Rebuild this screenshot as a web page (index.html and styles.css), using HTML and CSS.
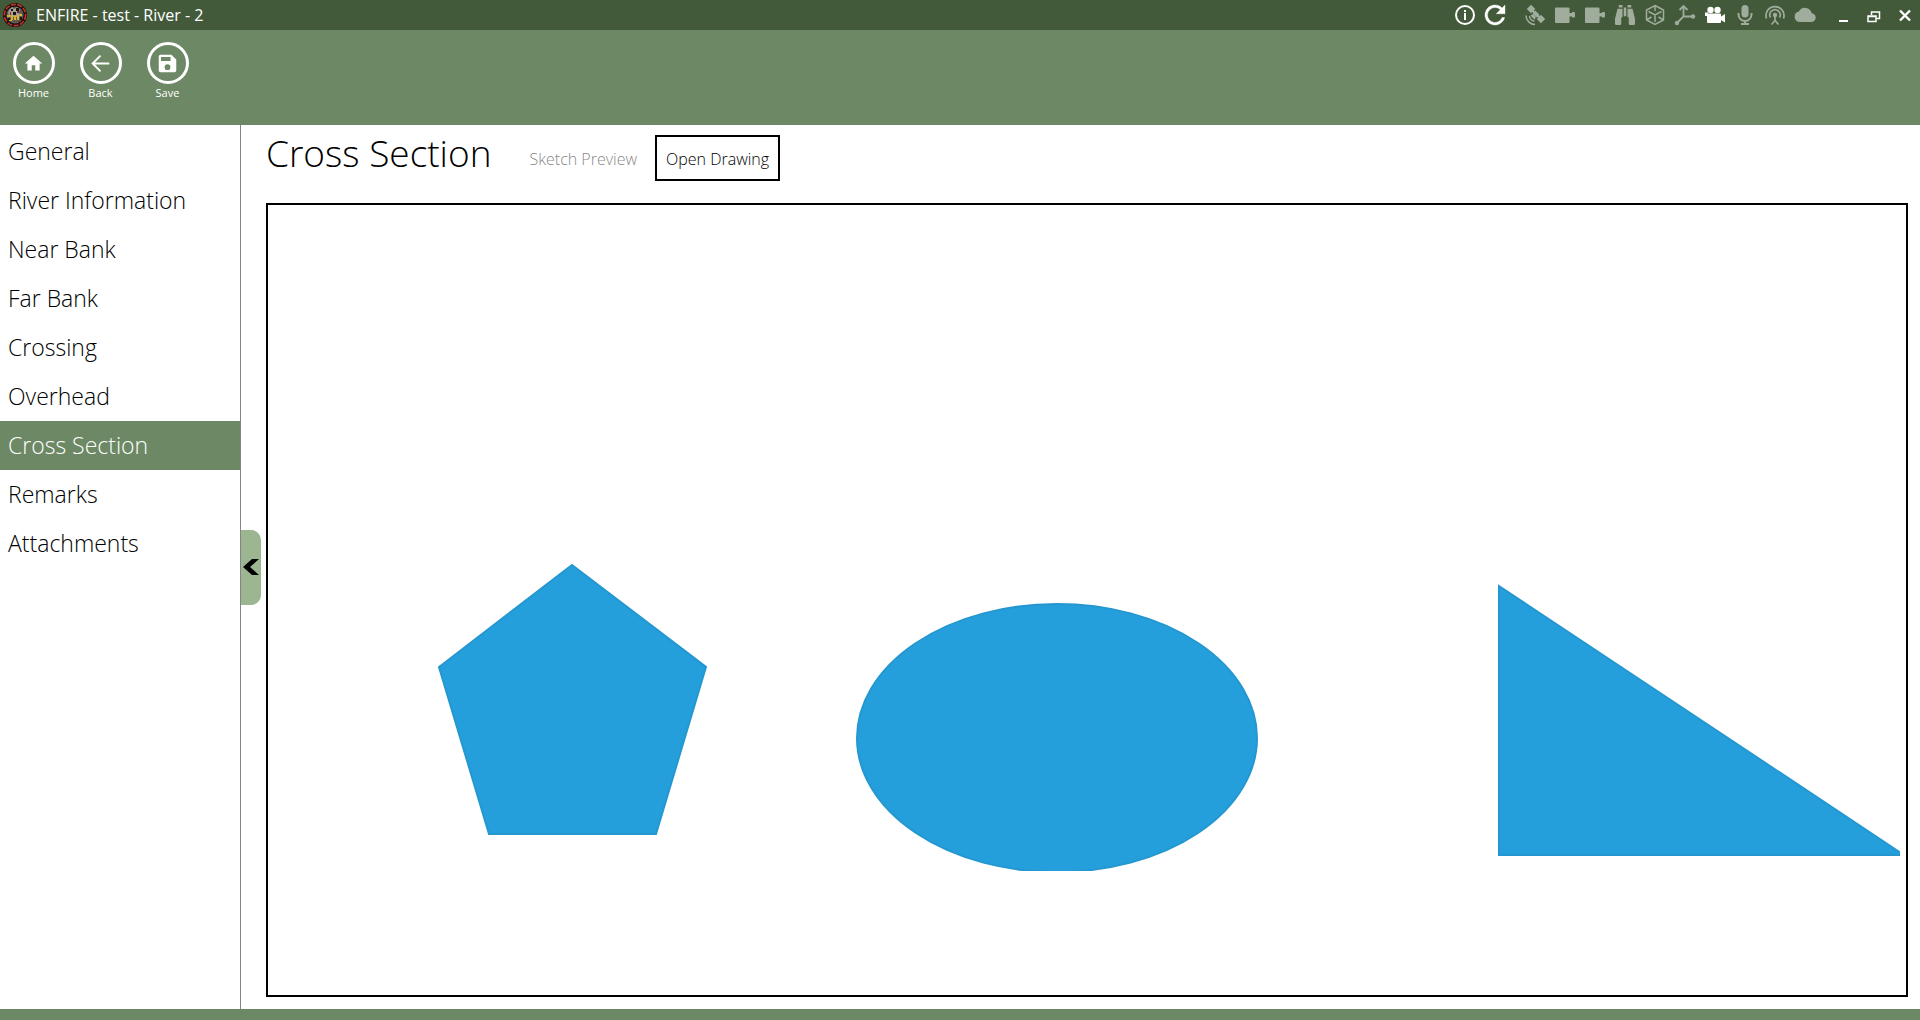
FILE: index.html
```html
<!DOCTYPE html>
<html lang="en">
<head>
<meta charset="utf-8">
<title>ENFIRE - test - River - 2</title>
<link rel="stylesheet" href="styles.css">
</head>
<body>
<div class="app">
  <header class="titlebar">
    <svg class="logo" viewBox="0 0 24 24" aria-hidden="true">
      <circle cx="12" cy="12" r="12" fill="#1c0f0d"/>
      <circle cx="12" cy="12" r="10.6" fill="none" stroke="#c8322a" stroke-width="1.6" stroke-dasharray="5 1.5"/>
      <circle cx="12" cy="12" r="8.6" fill="#5d5a54"/>
      <path d="M6 7l3-3 2 2 3-2 3 3-2 3 3 1-2 3H7l-2-4z" fill="#a39e96"/>
      <path d="M8 6h2v2H8zM13 5h3v3h-3zM10 9h3v3h-3zM5 15h2v3H5zM17 14h2v3h-2z" fill="#1b1716"/>
      <path d="M14 8h2v2h-2zM7 9h1v3H7zM15 18h3v1h-3z" fill="#7e2420"/>
      <path d="M4 12h3v2H4zM8 12h2v5H8zM11 13h2v4h-2zM14 12h2v5h-2zM17 11h2v2h-2zM6 17h3v1H6z" fill="#d9b52c"/>
    </svg>
    <span class="app-title">ENFIRE - test - River - 2</span>
    <div class="tray">
      <button class="tray-btn" aria-label="Information"><svg viewBox="0 0 30 30"><circle cx="15" cy="15" r="9" fill="none" stroke="currentColor" stroke-width="2"/><path d="M14 10h2v2h-2zM14 13h2v7h-2z"/></svg></button>
      <button class="tray-btn" aria-label="Refresh"><svg viewBox="0 0 24 24"><path d="M17.650 6.350A8 8 0 1 0 19.730 14h-2.080A6 6 0 1 1 12 6c1.660 0 3.140.690 4.220 1.780L13 11h7V4z" stroke="currentColor" stroke-width=".3"/></svg></button>
    </div>
    <div class="tray tray-status">
      <button class="tray-btn off" aria-label="Satellite"><svg viewBox="0 0 30 30"><g transform="translate(16 14) rotate(45)"><path d="M-10-3h6v6h-6zM4-3h6v6H4zM-3-2h6v4h-6zM-5-1H5v2H-5z"/><path d="M-2 2h4l1 3h-6z"/></g><path d="M9.500 16a5.500 5.500 0 0 0 5 5M6 15.500a9 9 0 0 0 9 9" fill="none" stroke="currentColor" stroke-width="1.500"/></svg></button>
      <button class="tray-btn off" aria-label="Plug one"><svg viewBox="0 0 30 30"><path d="M6 7.500h12.500q1 0 1 1V13h2.500v-1h2q1 0 1 1v3.500q0 1-1 1h-2v-1h-2.500V22q0 1-1 1H6q-1 0-1-1V8.500q0-1 1-1z"/></svg></button>
      <button class="tray-btn off" aria-label="Plug two"><svg viewBox="0 0 30 30"><path d="M6 7.500h12.500q1 0 1 1V13h2.500v-1h2q1 0 1 1v3.500q0 1-1 1h-2v-1h-2.500V22q0 1-1 1H6q-1 0-1-1V8.500q0-1 1-1z"/></svg></button>
      <button class="tray-btn off" aria-label="Binoculars"><svg viewBox="0 0 24 24"><path d="M11 6h2v7h-2zM9 19a1 1 0 0 1-1 1H5a1 1 0 0 1-1-1v-4L6 7h4v6a1 1 0 0 1-1 1zM10 6H7V4h3zM15 19v-5a1 1 0 0 1-1-1V7h4l2 8v4a1 1 0 0 1-1 1h-3a1 1 0 0 1-1-1zM14 6V4h3v2z"/></svg></button>
      <button class="tray-btn off" aria-label="Model"><svg viewBox="0 0 30 30"><path d="M15 5.500l8.500 4.500v10L15 24.500 6.500 20V10zM15 5.500V11M8.500 11.500L15 15l6.500-3.500M15 15v7M6.500 20l5-3M23.500 20l-5-3" fill="none" stroke="currentColor" stroke-width="1.500"/></svg></button>
      <button class="tray-btn off" aria-label="Axes"><svg viewBox="0 0 30 30"><path d="M13.500 6v10.500l-6 6M13.500 16.500H23M9.500 10l4-4 4 4" fill="none" stroke="currentColor" stroke-width="1.800"/><circle cx="23" cy="16.500" r="2.200"/><circle cx="7" cy="23" r="2.200"/></svg></button>
      <button class="tray-btn" aria-label="Camera"><svg viewBox="0 0 30 30"><circle cx="10.500" cy="10" r="3.200"/><circle cx="17.500" cy="10" r="3.200"/><path d="M5 12.500h3v1h12q1 0 1 1v2l4-2.500v8.500L21 20v2q0 1-1 1H8q-1 0-1-1v-6H5z"/></svg></button>
      <button class="tray-btn off" aria-label="Microphone"><svg viewBox="0 0 30 30"><rect x="11.500" y="5" width="7" height="12.500" rx="3.500"/><path d="M8.500 13v1.500a6.500 6.500 0 0 0 13 0V13M15 21v3M11 24h8" fill="none" stroke="currentColor" stroke-width="2"/></svg></button>
      <button class="tray-btn off" aria-label="Antenna"><svg viewBox="0 0 30 30"><circle cx="15" cy="15" r="2.200"/><path d="M6.500 18.500a9 9 0 1 1 17 0M10.500 17.500a5.200 5.200 0 1 1 9 0M15 16v5M11.500 24.500l3.500-4 3.500 4" fill="none" stroke="currentColor" stroke-width="1.700"/></svg></button>
      <button class="tray-btn off" aria-label="Cloud"><svg viewBox="0 0 24 24"><path d="M17.400 10.600A5.600 5.600 0 0 0 7.100 9.100 4.300 4.300 0 0 0 8 17.600h8.700a3.500 3.500 0 0 0 .7-7z"/></svg></button>
    </div>
    <div class="window-controls">
      <button class="win-btn" aria-label="Minimize"><svg viewBox="0 0 30 30"><path d="M11 20h9v2h-9z"/></svg></button>
      <button class="win-btn" aria-label="Restore"><svg viewBox="0 0 30 30"><path d="M12.500 15v-3h8v6.500H17M12 12h9M9 16h8v5.500H9zM9 16.500h8" fill="none" stroke="currentColor" stroke-width="1.500"/></svg></button>
      <button class="win-btn" aria-label="Close"><svg viewBox="0 0 30 30"><path d="M10 10.500l10 10M20 10.500l-10 10" fill="none" stroke="currentColor" stroke-width="2.400"/></svg></button>
    </div>
  </header>

  <div class="toolbar">
    <button class="tool"><span class="tool-ring"><svg viewBox="0 0 24 24"><path d="M10 20v-6h4v6h5v-8h3L12 3 2 12h3v8z"/></svg></span>Home</button>
    <button class="tool"><span class="tool-ring"><svg viewBox="0 0 24 24"><path d="M22 12H3M12 3l-9 9 9 9" fill="none" stroke="currentColor" stroke-width="2.200"/></svg></span>Back</button>
    <button class="tool"><span class="tool-ring"><svg viewBox="0 0 24 24"><path d="M16.500 2H4a2 2 0 0 0-2 2v16a2 2 0 0 0 2 2h16a2 2 0 0 0 2-2V7.500zM12 19.500a3.300 3.300 0 1 1 0-6.600 3.300 3.300 0 0 1 0 6.600zM15.500 9H4.500V4.500h11z"/></svg></span>Save</button>
  </div>

  <div class="workspace">
    <nav class="sidebar">
      <a class="nav-item" href="#general">General</a>
      <a class="nav-item" href="#river">River Information</a>
      <a class="nav-item" href="#near">Near Bank</a>
      <a class="nav-item" href="#far">Far Bank</a>
      <a class="nav-item" href="#crossing">Crossing</a>
      <a class="nav-item" href="#overhead">Overhead</a>
      <a class="nav-item active" href="#cross-section" aria-current="page">Cross Section</a>
      <a class="nav-item" href="#remarks">Remarks</a>
      <a class="nav-item" href="#attachments">Attachments</a>
    </nav>
    <button class="collapse" aria-label="Collapse menu"><svg viewBox="0 0 16 16"><path d="M9 0h7L7 8l9 8H9L0 8z"/></svg></button>
    <main class="content">
      <div class="content-head">
        <h1 class="heading">Cross Section</h1>
        <span class="hint">Sketch Preview</span>
        <button class="open-btn">Open Drawing</button>
      </div>
      <div class="sketch">
        <svg class="drawing" viewBox="0 0 1626 542" role="img" aria-label="Sketch preview">
          <polygon points="298,236 432,338 382,505 215,505 165,338"/>
          <ellipse cx="783" cy="409" rx="200" ry="134"/>
          <polygon points="1225,257 1225,526 1630,526"/>
        </svg>
      </div>
    </main>
  </div>
  <footer class="statusbar"></footer>
</div>
</body>
</html>
```
FILE: styles.css
```css
* {
  box-sizing: border-box;
}

body {
  margin: 0;
  font-family: "Open Sans", "Noto Sans", sans-serif;
  font-weight: 300;
  color: #000;
  background: #fff;
}

button {
  margin: 0;
  padding: 0;
  border: 0;
  background: none;
  color: inherit;
  font: inherit;
}

svg {
  display: block;
  fill: currentColor;
}

.app {
  display: flex;
  flex-direction: column;
  min-height: 100vh;
}

.titlebar {
  display: flex;
  align-items: center;
  height: 30px;
  padding-left: 3px;
  background: #425a3a;
  color: #fff;
}

.logo {
  width: 24px;
  height: 24px;
}

.app-title {
  margin: 0 auto 0 9px;
  font-size: 16px;
  font-weight: 400;
  line-height: 32px;
}

.tray,
.window-controls {
  display: flex;
}

.tray-status {
  margin: 0 7px 0 10px;
}

.tray-btn,
.win-btn {
  display: flex;
  justify-content: center;
  width: 30px;
  height: 30px;
}

.win-btn {
  width: 31px;
}

.tray-btn svg,
.win-btn svg {
  width: 30px;
  height: 30px;
}

.off {
  color: #a0ac9c;
}

.toolbar {
  display: flex;
  align-items: flex-start;
  height: 95px;
  padding-top: 12px;
  background: #6d8865;
  color: #fff;
}

.tool {
  display: flex;
  flex-direction: column;
  align-items: center;
  width: 67px;
  font-size: 11px;
  font-weight: 400;
  line-height: 18px;
}

.tool-ring {
  display: grid;
  place-items: center;
  width: 42px;
  height: 42px;
  border: 3px solid #fff;
  border-radius: 50%;
}

.tool-ring svg {
  width: 21px;
  height: 21px;
}

.workspace {
  display: flex;
  flex: 1;
}

.sidebar {
  width: 241px;
  padding-top: 2px;
  border-right: 1px solid #858585;
}

.nav-item {
  display: block;
  padding-left: 8px;
  font-size: 23px;
  line-height: 49px;
  color: #000;
  text-decoration: none;
}

.active {
  background: #6d8865;
  color: #fff;
}

.collapse {
  display: grid;
  place-items: center;
  align-self: center;
  width: 20px;
  height: 75px;
  border-radius: 0 10px 10px 0;
  background: #9db692;
}

.collapse svg {
  width: 16px;
  height: 16px;
}

.content {
  display: flex;
  flex: 1;
  flex-direction: column;
  padding: 10px 12px 12px 5px;
}

.content-head {
  display: flex;
  align-items: flex-start;
  height: 46px;
  margin-bottom: 22px;
}

.heading {
  margin: 0;
  font-size: 37px;
  font-weight: 300;
  line-height: 36px;
}

.hint {
  margin: 0 18px 0 38px;
  font-size: 16px;
  line-height: 48px;
  color: #888;
}

.open-btn {
  height: 46px;
  padding: 2px 9px 0;
  border: 2px solid #000;
  font-size: 16px;
}

.sketch {
  display: flex;
  flex: 1;
  align-items: center;
  padding: 6px;
  border: 2px solid #000;
}

.drawing {
  width: 100%;
  overflow: hidden;
  fill: #259fdb;
  stroke: #2497d0;
  stroke-width: 2;
}

.statusbar {
  height: 11px;
  background: #6d8865;
}
```
